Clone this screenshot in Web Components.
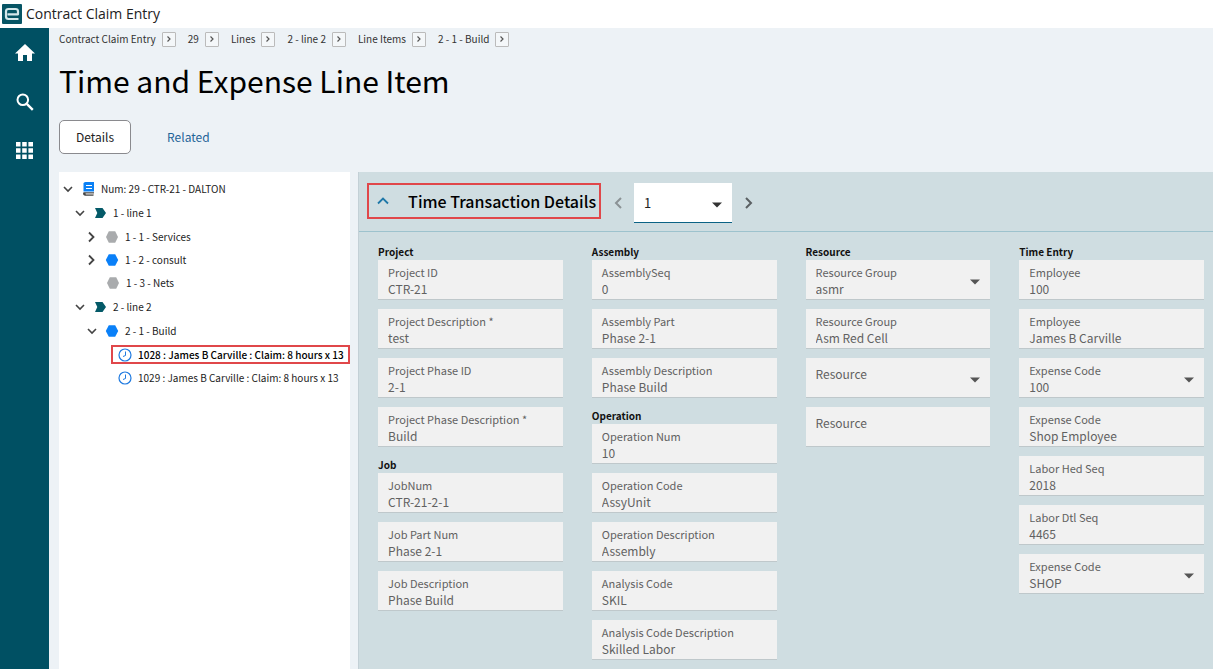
<!DOCTYPE html>
<html lang="en">
<head>
<meta charset="utf-8">
<meta name="viewport" content="width=device-width, initial-scale=1">
<title>Contract Claim Entry</title>
<style>
    body {
        margin: 0;
        font-family: "Noto Sans CJK SC", "Open Sans", sans-serif;
        color: #111;
    }
</style>
</head>
<body>

<claim-app>
    <title-bar slot="top">Contract Claim Entry</title-bar>
    <side-nav slot="nav"></side-nav>

    <bread-crumbs slot="header" items="Contract Claim Entry|29|Lines|2 - line 2|Line Items|2 - 1 - Build"></bread-crumbs>
    <page-title slot="header">Time and Expense Line Item</page-title>
    <tab-list slot="header" tabs="Details|Related"></tab-list>

    <tree-panel slot="tree">
        <tree-item icon="book" label="Num: 29 - CTR-21 - DALTON" open>
            <tree-item icon="line" label="1 - line 1" open>
                <tree-item icon="hex-grey" label="1 - 1 - Services"></tree-item>
                <tree-item icon="hex-blue" label="1 - 2 - consult"></tree-item>
                <tree-item icon="hex-grey" label="1 - 3 - Nets" leaf></tree-item>
            </tree-item>
            <tree-item icon="line" label="2 - line 2" open>
                <tree-item icon="hex-blue" label="2 - 1 - Build" open>
                    <tree-item icon="clock" label="1028 : James B Carville : Claim: 8 hours x 13" leaf selected></tree-item>
                    <tree-item icon="clock" label="1029 : James B Carville : Claim: 8 hours x 13" leaf></tree-item>
                </tree-item>
            </tree-item>
        </tree-item>
    </tree-panel>

    <detail-panel slot="detail" heading="Time Transaction Details" record="1">
        <div>
            <field-group heading="Project">
                <form-field label="Project ID" value="CTR-21"></form-field>
                <form-field label="Project Description *" value="test"></form-field>
                <form-field label="Project Phase ID" value="2-1"></form-field>
                <form-field label="Project Phase Description *" value="Build"></form-field>
            </field-group>
            <field-group heading="Job">
                <form-field label="JobNum" value="CTR-21-2-1"></form-field>
                <form-field label="Job Part Num" value="Phase 2-1"></form-field>
                <form-field label="Job Description" value="Phase Build"></form-field>
            </field-group>
        </div>
        <div>
            <field-group heading="Assembly">
                <form-field label="AssemblySeq" value="0"></form-field>
                <form-field label="Assembly Part" value="Phase 2-1"></form-field>
                <form-field label="Assembly Description" value="Phase Build"></form-field>
            </field-group>
            <field-group heading="Operation">
                <form-field label="Operation Num" value="10"></form-field>
                <form-field label="Operation Code" value="AssyUnit"></form-field>
                <form-field label="Operation Description" value="Assembly"></form-field>
                <form-field label="Analysis Code" value="SKIL"></form-field>
                <form-field label="Analysis Code Description" value="Skilled Labor"></form-field>
            </field-group>
        </div>
        <div>
            <field-group heading="Resource">
                <form-field label="Resource Group" value="asmr" type="select"></form-field>
                <form-field label="Resource Group" value="Asm Red Cell"></form-field>
                <form-field label="Resource" value="" type="select"></form-field>
                <form-field label="Resource" value=""></form-field>
            </field-group>
        </div>
        <div>
            <field-group heading="Time Entry">
                <form-field label="Employee" value="100"></form-field>
                <form-field label="Employee" value="James B Carville"></form-field>
                <form-field label="Expense Code" value="100" type="select"></form-field>
                <form-field label="Expense Code" value="Shop Employee"></form-field>
                <form-field label="Labor Hed Seq" value="2018"></form-field>
                <form-field label="Labor Dtl Seq" value="4465"></form-field>
                <form-field label="Expense Code" value="SHOP" type="select"></form-field>
            </field-group>
        </div>
    </detail-panel>
</claim-app>

<script>
const icons = {
    home: `<svg width="20" height="18" viewBox="0 0 20 18"><path fill="#fff" d="M10 0 0 9.5h3V17h5v-6h4v6h5V9.500h3z"/></svg>`,
    search: `<svg width="18" height="18" viewBox="0 0 18 18" fill="none" stroke="#fff"><circle cx="6.800" cy="6.800" r="5.300" stroke-width="2"/><path stroke-width="2.400" d="m10.800 10.800 6 6"/></svg>`,
    apps: `<svg width="17" height="17" viewBox="0 0 17 17" fill="#fff"><path d="M0 0h4.500v4.500H0zM6.200 0h4.500v4.500H6.200zM12.400 0H17v4.500h-4.600zM0 6.200h4.500v4.500H0zM6.200 6.200h4.500v4.500H6.200zM12.400 6.200H17v4.500h-4.600zM0 12.400h4.500V17H0zM6.200 12.400h4.500V17H6.200zM12.400 12.400H17V17h-4.600z"/></svg>`,
    book: `<svg width="14" height="14" viewBox="0 0 14 14"><path fill="#0a80f5" d="M4.500 0H13v9.500H2.500v-8Q2.500 0 4.500 0z"/><path stroke="#fff" d="M5 3.500h6M5 6.500h6"/><path fill="#444" d="M2.500 10.300H13v1.200H4.500v.8h8v1.400H4q-2-.4-2-1.900z"/><path stroke="#bbb" d="M5 12h8"/></svg>`,
    line: `<svg width="14" height="14" viewBox="0 0 14 14"><path fill="#045a68" d="M2 2h7.500L13 7l-3.500 5H2l2.300-5z"/></svg>`,
    'hex-grey': `<svg width="14" height="14" viewBox="0 0 14 14"><path fill="#a9abad" d="M3.800 1.200h6.400L13 7l-2.800 5.800H3.800L1 7z"/></svg>`,
    'hex-blue': `<svg width="14" height="14" viewBox="0 0 14 14"><path fill="#0a80f8" d="M3.800 1.200h6.400L13.200 7l-3 5.800H3.800L.8 7z"/></svg>`,
    clock: `<svg width="14" height="14" viewBox="0 0 14 14" fill="none" stroke="#1f7ae0"><circle cx="7" cy="7" r="6" stroke-width="1.200"/><path d="M7.500 3.500v4L5 8.500"/></svg>`,
    down: `<svg width="12" height="12" viewBox="0 0 12 12" fill="none" stroke="#444" stroke-width="1.600"><path d="m2 4 4 4 4-4"/></svg>`,
    right: `<svg width="12" height="12" viewBox="0 0 12 12" fill="none" stroke="#444" stroke-width="1.800"><path d="m3 1.500 4.500 4.500L3 10.500"/></svg>`
};

class ClaimApp extends HTMLElement {

    connectedCallback(){
        this.attachShadow({ mode: 'open' }).innerHTML =
        `
        <style>
            :host {
                display: flex;
                flex-direction: column;
                min-height: 100vh;
                background: #edf2f6;
            }
            .page {
                display: flex;
                flex: 1;
            }
            main {
                display: flex;
                flex: 1;
                flex-direction: column;
                min-width: 0;
                padding-left: 10px;
            }
            header {
                padding-bottom: 18px;
            }
            .work {
                display: grid;
                flex: 1;
                gap: 8px;
                grid-template-columns: minmax(240px, 24vw) minmax(0, 1fr);
            }
        </style>

        <slot name="top"></slot>
        <div class="page">
            <slot name="nav"></slot>
            <main>
                <header><slot name="header"></slot></header>
                <div class="work">
                    <slot name="tree"></slot>
                    <slot name="detail"></slot>
                </div>
            </main>
        </div>
        `
    }
}

class TitleBar extends HTMLElement {

    connectedCallback(){
        this.attachShadow({ mode: 'open' }).innerHTML =
        `
        <style>
            :host {
                align-items: center;
                background: #fff;
                box-sizing: border-box;
                color: #222;
                display: flex;
                font: 14px/20px "Open Sans", sans-serif;
                gap: 4px;
                height: 28px;
                padding: 0 2px;
            }
        </style>
        <svg width="20" height="20" viewBox="0 0 20 20">
            <rect width="20" height="20" rx="1" fill="#075565"/>
            <path fill="none" stroke="#d5e8eb" stroke-width="2.200" stroke-linejoin="round" d="M5.500 10.300H16V7.500Q16 5 13.500 5H6.500Q4 5 4 7.500v5Q4 15 6.500 15H16.500"/>
        </svg>
        <span><slot></slot></span>
        `
    }
}

class SideNav extends HTMLElement {

    connectedCallback(){
        this.attachShadow({ mode: 'open' }).innerHTML =
        `
        <style>
            :host {
                background: #005063;
                display: block;
                width: 49px;
            }
            nav {
                display: flex;
                flex-direction: column;
            }
            button {
                align-items: center;
                background: transparent;
                border: 0;
                cursor: pointer;
                display: flex;
                height: 49px;
                justify-content: center;
                padding: 0;
            }
        </style>
        <nav>
            <button type="button" aria-label="Home">${icons.home}</button>
            <button type="button" aria-label="Search">${icons.search}</button>
            <button type="button" aria-label="Menu">${icons.apps}</button>
        </nav>
        `
    }
}

class BreadCrumbs extends HTMLElement {

    connectedCallback(){
        let items = this.getAttribute("items").split("|");

        this.attachShadow({ mode: 'open' }).innerHTML =
        `
        <style>
            :host {
                display: block;
            }
            nav {
                display: flex;
                gap: 12px;
                padding-top: 3px;
            }
            span {
                align-items: center;
                display: flex;
                gap: 6px;
            }
            a {
                color: #333;
                font-size: 10px;
                line-height: 16px;
                text-decoration: none;
            }
            button {
                align-items: center;
                background: #f4f7f9;
                border: 1px solid #bbb;
                border-radius: 1px;
                cursor: pointer;
                display: flex;
                height: 15px;
                justify-content: center;
                padding: 0;
                width: 14px;
            }
        </style>
        <nav>
            ${items.map((item) => `
            <span>
                <a href="#">${item}</a>
                <button type="button" aria-label="Open ${item}">
                    <svg width="6" height="8" viewBox="0 0 6 8" fill="none" stroke="#555" stroke-width="1.200"><path d="m1.500 1.500 2.500 2.500-2.500 2.500"/></svg>
                </button>
            </span>`).join("")}
        </nav>
        `
    }
}

class PageTitle extends HTMLElement {

    connectedCallback(){
        this.attachShadow({ mode: 'open' }).innerHTML =
        `
        <style>
            :host {
                display: block;
            }
            h1 {
                color: #000;
                font-size: 30px;
                font-weight: 400;
                line-height: 40px;
                margin: 0;
                padding: 13px 0 20px;
            }
        </style>
        <h1><slot></slot></h1>
        `
    }
}

class TabList extends HTMLElement {

    connectedCallback(){
        let tabs = this.getAttribute("tabs").split("|");

        this.attachShadow({ mode: 'open' }).innerHTML =
        `
        <style>
            :host {
                display: block;
            }
            div {
                display: flex;
                gap: 19px;
            }
            button {
                background: transparent;
                border: 1px solid transparent;
                border-radius: 5px;
                color: #1f6498;
                cursor: pointer;
                font: inherit;
                font-size: 12px;
                height: 34px;
                line-height: 20px;
                padding: 0 16px;
            }
            button[aria-selected="true"] {
                background: #fff;
                border-color: #8a8a8e;
                color: #222;
            }
        </style>
        <div role="tablist">
            ${tabs.map((tab, i) => `<button type="button" role="tab" aria-selected="${i === 0}">${tab}</button>`).join("")}
        </div>
        `

        let buttons = this.shadowRoot.querySelectorAll("button");

        buttons.forEach((button) => {
            button.addEventListener("click", () => {
                buttons.forEach((b) => b.setAttribute("aria-selected", b === button));
            })
        })
    }
}

class TreePanel extends HTMLElement {

    connectedCallback(){
        this.attachShadow({ mode: 'open' }).innerHTML =
        `
        <style>
            :host {
                background: #fff;
                box-sizing: border-box;
                display: block;
                overflow: hidden;
                padding: 5px 0 0 3px;
            }
        </style>
        <slot></slot>
        `
    }
}

class TreeItem extends HTMLElement {

    connectedCallback(){
        this.attachShadow({ mode: 'open' }).innerHTML =
        `
        <style>
            :host {
                display: block;
            }
            .row {
                align-items: center;
                display: flex;
                height: 23px;
            }
            button {
                background: transparent;
                border: 0;
                cursor: pointer;
                display: flex;
                flex: none;
                padding: 0;
                width: 12px;
            }
            .space {
                flex: none;
                width: 13px;
            }
            .right, :host([open]) .down {
                display: flex;
            }
            .down, :host([open]) .right {
                display: none;
            }
            a {
                align-items: center;
                box-sizing: border-box;
                color: #222;
                display: flex;
                flex: 1;
                font-size: 10px;
                gap: 6px;
                height: 19px;
                min-width: 0;
                padding-left: 7px;
                text-decoration: none;
                white-space: nowrap;
            }
            svg {
                flex: none;
            }
            :host([selected]) a {
                color: #000;
                font-weight: 500;
                outline: 2px solid #e0474a;
                outline-offset: -2px;
            }
            .children {
                display: none;
                padding: 1px 0 1px 12px;
            }
            :host([open]) > .children {
                display: block;
            }
        </style>
        <div class="row">
            ${this.hasAttribute("leaf") ? `<span class="space"></span>` : `
            <button type="button" aria-label="Toggle">
                <span class="down">${icons.down}</span>
                <span class="right">${icons.right}</span>
            </button>`}
            <a href="#">${icons[this.getAttribute("icon")]}<span>${this.getAttribute("label")}</span></a>
        </div>
        <div class="children"><slot></slot></div>
        `

        let button = this.shadowRoot.querySelector("button");

        if (button) {
            button.addEventListener("click", () => this.toggleAttribute("open"));
        }
    }
}

class DetailPanel extends HTMLElement {

    connectedCallback(){
        this.attachShadow({ mode: 'open' }).innerHTML =
        `
        <style>
            :host {
                background: #cfdde1;
                border-left: 1px solid #c3d0d6;
                box-sizing: border-box;
                display: block;
            }
            .head {
                align-items: flex-start;
                border-bottom: 1px solid #9dc2cd;
                box-sizing: border-box;
                display: flex;
                height: 60px;
                padding: 11px 8px 0;
            }
            h2 {
                border: 2px solid #e0474a;
                box-sizing: border-box;
                font-size: 16px;
                line-height: 32px;
                margin: 0;
            }
            button {
                background: transparent;
                border: 0;
                color: inherit;
                cursor: pointer;
                display: flex;
                align-items: center;
                padding: 0;
            }
            h2 button {
                font: inherit;
                font-weight: 500;
                color: #000;
                gap: 17px;
                padding: 0 3px 0 6px;
            }
            .step {
                height: 40px;
                justify-content: center;
                width: 33px;
            }
            .pick {
                display: grid;
                position: relative;
            }
            select {
                appearance: none;
                background: #fff;
                border: 0;
                border-bottom: 1px solid #0b6285;
                border-radius: 0;
                color: #222;
                font: inherit;
                font-size: 13px;
                height: 40px;
                padding: 0 10px;
                width: 98px;
            }
            .pick svg {
                pointer-events: none;
                position: absolute;
                right: 10px;
                top: 19px;
            }
            .fields {
                display: grid;
                gap: 29px;
                grid-template-columns: repeat(4, minmax(0, 1fr));
                padding: 11px 9px 0 19px;
            }
        </style>
        <div class="head">
            <h2><button type="button" aria-expanded="true">
                <svg width="16" height="12" viewBox="0 0 16 12" fill="none" stroke="#1f78a8" stroke-width="1.800"><path d="m3 8.500 5-5 5 5"/></svg>
                <span>${this.getAttribute("heading")}</span>
            </button></h2>
            <button class="step" type="button" aria-label="Previous">
                <svg width="10" height="14" viewBox="0 0 10 14" fill="none" stroke="#8b9295" stroke-width="2"><path d="M8 2 3 7l5 5"/></svg>
            </button>
            <div class="pick">
                <select aria-label="Record"><option>${this.getAttribute("record")}</option></select>
                <svg width="10" height="6" viewBox="0 0 10 6"><path fill="#333" d="M0 .5h10l-5 5z"/></svg>
            </div>
            <button class="step" type="button" aria-label="Next">
                <svg width="10" height="14" viewBox="0 0 10 14" fill="none" stroke="#5b6063" stroke-width="2"><path d="m2 2 5 5-5 5"/></svg>
            </button>
        </div>
        <div class="fields"><slot></slot></div>
        `

        let toggle = this.shadowRoot.querySelector("h2 button");
        let fields = this.shadowRoot.querySelector(".fields");

        toggle.addEventListener("click", () => {
            fields.hidden = !fields.hidden;
            fields.style.display = fields.hidden ? "none" : "";
            toggle.setAttribute("aria-expanded", !fields.hidden);
        })
    }
}

class FieldGroup extends HTMLElement {

    connectedCallback(){
        this.attachShadow({ mode: 'open' }).innerHTML =
        `
        <style>
            :host {
                display: block;
            }
            h3 {
                font-size: 10px;
                font-weight: 700;
                line-height: 17px;
                margin: 0;
            }
        </style>
        <h3>${this.getAttribute("heading")}</h3>
        <slot></slot>
        `
    }
}

class FormField extends HTMLElement {

    connectedCallback(){
        let label = this.getAttribute("label");
        let value = this.getAttribute("value");
        let isSelect = this.getAttribute("type") === "select";

        this.attachShadow({ mode: 'open' }).innerHTML =
        `
        <style>
            :host {
                display: block;
                margin-bottom: 10px;
            }
            .field {
                background: #f1f1f1;
                box-shadow: 0 1px 0 #bfc8cb;
                display: grid;
                height: 39px;
                position: relative;
            }
            label, input, select {
                box-sizing: border-box;
                color: #616161;
                grid-area: 1 / 1;
                padding: 0 10px;
            }
            label {
                font-size: 11px;
                line-height: 16px;
                padding-top: 4px;
                pointer-events: none;
                z-index: 1;
            }
            .empty label {
                font-size: 12px;
                padding-top: 8px;
            }
            input, select {
                appearance: none;
                background: transparent;
                border: 0;
                border-radius: 0;
                font: inherit;
                font-size: 12px;
                height: 39px;
                line-height: 18px;
                min-width: 0;
                outline: 0;
                padding-top: 19px;
                width: 100%;
            }
            input {
                padding-top: 17px;
            }
            svg {
                pointer-events: none;
                position: absolute;
                right: 10px;
                top: 19px;
            }
        </style>
        <div class="field ${value ? "" : "empty"}">
            <label for="control">${label}</label>
            ${isSelect
                ? `<select id="control"><option>${value}</option></select>
                   <svg width="10" height="6" viewBox="0 0 10 6"><path fill="#555" d="M0 .5h10l-5 5z"/></svg>`
                : `<input id="control" type="text" value="${value}" readonly>`}
        </div>
        `
    }
}

customElements.define('claim-app', ClaimApp);
customElements.define('title-bar', TitleBar);
customElements.define('side-nav', SideNav);
customElements.define('bread-crumbs', BreadCrumbs);
customElements.define('page-title', PageTitle);
customElements.define('tab-list', TabList);
customElements.define('tree-panel', TreePanel);
customElements.define('tree-item', TreeItem);
customElements.define('detail-panel', DetailPanel);
customElements.define('field-group', FieldGroup);
customElements.define('form-field', FormField);
</script>
</body>
</html>
